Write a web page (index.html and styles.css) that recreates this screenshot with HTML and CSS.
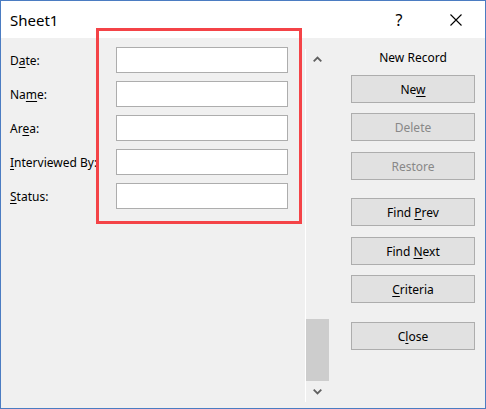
FILE: index.html
```html
<!DOCTYPE html>
<html lang="en">
<head>
<meta charset="utf-8">
<title>Sheet1</title>
<link rel="stylesheet" href="styles.css">
</head>
<body>
<div class="window">
  <div class="titlebar">
    <span class="title">Sheet1</span>
    <span class="tb-btn help">?</span>
    <span class="tb-btn close">
      <svg width="12" height="12" viewBox="0 0 12 12"><path d="M0.5 0.5 L11.5 11.5 M11.5 0.5 L0.5 11.5" stroke="#000" stroke-width="1.1" fill="none"/></svg>
    </span>
  </div>
  <div class="content">
    <div class="form">
      <label class="lbl"><span>D<u>a</u>te:</span></label><div class="field"></div>
      <label class="lbl"><span>Na<u>m</u>e:</span></label><div class="field"></div>
      <label class="lbl"><span>Ar<u>e</u>a:</span></label><div class="field"></div>
      <label class="lbl"><span><u>I</u>nterviewed By:</span></label><div class="field"></div>
      <label class="lbl"><span><u>S</u>tatus:</span></label><div class="field"></div>
    </div>
    <div class="scrollbar">
      <div class="arrow up">
        <svg width="9" height="6" viewBox="0 0 9 6"><path d="M0.7 5.3 L4.5 1.5 L8.3 5.3" stroke="#606060" stroke-width="1.8" fill="none"/></svg>
      </div>
      <div class="track"><div class="thumb"></div></div>
      <div class="arrow down">
        <svg width="9" height="6" viewBox="0 0 9 6"><path d="M0.7 0.7 L4.5 4.5 L8.3 0.7" stroke="#606060" stroke-width="1.8" fill="none"/></svg>
      </div>
    </div>
    <div class="actions">
      <div class="record">New Record</div>
      <div class="btn first"><span>Ne<u>w</u></span></div>
      <div class="btn disabled g10"><span>Delete</span></div>
      <div class="btn disabled g11"><span>Restore</span></div>
      <div class="btn g18"><span>Find <u>P</u>rev</span></div>
      <div class="btn g11"><span>Find <u>N</u>ext</span></div>
      <div class="btn g10"><span><u>C</u>riteria</span></div>
      <div class="btn g19"><span>C<u>l</u>ose</span></div>
    </div>
  </div>
  <div class="highlight"></div>
</div>
</body>
</html>
```

FILE: styles.css
```css
* { box-sizing: border-box; }
html, body { margin: 0; padding: 0; background: #fff; }
body {
  font-family: "Noto Sans", "Open Sans", sans-serif;
  font-size: 12px;
  color: #000;
}
u { text-decoration: underline; text-underline-offset: 2px; text-decoration-thickness: 1px; }

.window {
  position: relative;
  width: 486px;
  height: 409px;
  border: 1px solid #4b7cc2;
  background: #f0f0f0;
  display: flex;
  flex-direction: column;
}

.titlebar {
  height: 37px;
  background: #fff;
  display: flex;
  align-items: center;
  padding: 0 6px 0 9px;
}
.title { font-size: 15px; flex: 1; }
.tb-btn {
  width: 46px;
  height: 37px;
  display: flex;
  align-items: center;
  justify-content: center;
}
.help { font-size: 16px; margin-right: 11px; }

.content {
  flex: 1;
  display: flex;
}

.form {
  width: 304px;
  padding: 9px 0 0 9px;
  display: grid;
  grid-template-columns: 106px 172px;
  grid-auto-rows: 26px;
  row-gap: 8px;
  align-content: start;
}
.lbl {
  display: flex;
  align-items: center;
  white-space: nowrap;
}
.field {
  background: #fff;
  border: 1px solid #adadad;
}

.scrollbar {
  width: 24px;
  margin: 11px 0 6px;
  border-left: 1px solid #fff;
  display: flex;
  flex-direction: column;
}
.arrow {
  display: flex;
  align-items: center;
  justify-content: center;
}
.arrow.up { height: 20px; }
.arrow.down { height: 21px; }
.track {
  flex: 1;
  display: flex;
  flex-direction: column;
  justify-content: flex-end;
}
.thumb {
  height: 62px;
  background: #cdcdcd;
}

.actions {
  flex: 1;
  padding: 10px 10px 0 22px;
  display: flex;
  flex-direction: column;
}
.record {
  height: 20px;
  line-height: 20px;
  text-align: center;
  white-space: nowrap;
}
.btn {
  height: 28px;
  background: #e1e1e1;
  border: 1px solid #adadad;
  display: flex;
  align-items: center;
  justify-content: center;
  white-space: nowrap;
}
.btn.disabled { color: #888; }
.first { margin-top: 7px; }
.g10 { margin-top: 10px; }
.g11 { margin-top: 11px; }
.g18 { margin-top: 18px; }
.g19 { margin-top: 19px; }

.highlight {
  position: absolute;
  left: 95px;
  top: 27px;
  width: 206px;
  height: 196px;
  border: 3px solid #f44347;
  pointer-events: none;
}
```
